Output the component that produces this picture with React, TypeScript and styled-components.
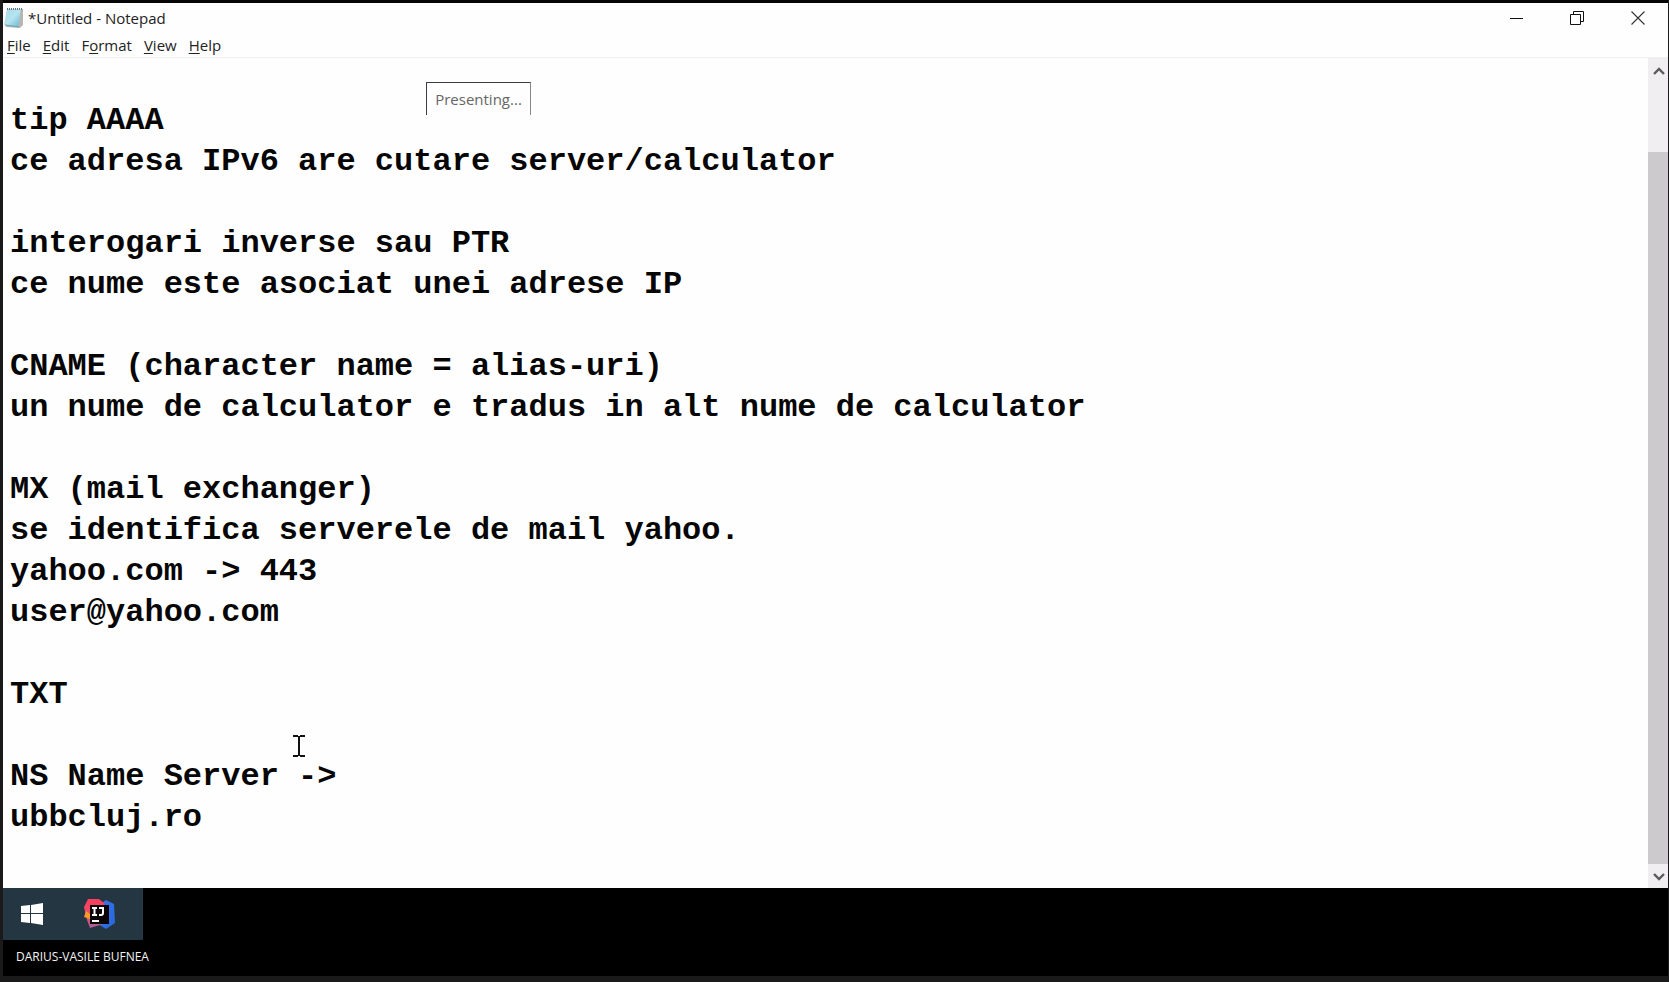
import React from "react";
import styled, { createGlobalStyle } from "styled-components";

const GlobalStyle = createGlobalStyle`
  * { box-sizing: border-box; }
  body {
    margin: 0;
    background: #1a1a1a;
    font-family: "Open Sans", "Noto Sans", sans-serif;
  }
  button { border: 0; padding: 0; background: none; font: inherit; color: inherit; }
`;

const Screen = styled.div`
  display: flex;
  flex-direction: column;
  min-height: 100vh;
  padding: 0 1px 6px 3px;
`;

const NotepadWindow = styled.main`
  position: relative;
  flex: 1;
  display: flex;
  flex-direction: column;
  background: #fefefe;
  border-top: 3px solid #050505;
`;

const TitleBar = styled.header`
  display: flex;
  align-items: center;
  height: 30px;
  padding-left: 1px;
`;

const Title = styled.h1`
  flex: 1;
  margin: 0 0 0 4px;
  font-size: 15px;
  line-height: 20px;
  font-weight: 400;
  color: #222;
`;

const CaptionButton = styled.button`
  display: flex;
  align-items: center;
  justify-content: center;
  width: 61px;
  height: 30px;
`;

const MenuBar = styled.nav`
  display: flex;
  gap: 12px;
  height: 25px;
  padding-left: 4px;
  border-bottom: 1px solid #efefef;
`;

const MenuButton = styled.button`
  font-size: 15px;
  line-height: 24px;
  color: #222;
  u { text-underline-offset: 2px; }
`;

const Editor = styled.div`
  flex: 1;
  display: flex;
`;

const Document = styled.textarea`
  flex: 1;
  min-width: 0;
  border: 0;
  outline: 0;
  resize: none;
  overflow: hidden;
  padding: 1px 7px 0;
  background: transparent;
  color: #060606;
  font: 700 32px/41px "Liberation Mono", monospace;
`;

const ScrollBar = styled.div`
  display: flex;
  flex-direction: column;
  width: 20px;
  background: #f1eef1;
`;

const ScrollButton = styled.button`
  display: flex;
  align-items: center;
  justify-content: center;
  height: 24px;
  padding: 2px 0 0 2px;
`;

const Track = styled.div`
  flex: 1;
  display: flex;
  flex-direction: column;
  justify-content: flex-end;
`;

const Thumb = styled.div`
  height: 91%;
  background: #cdcacd;
`;

const PresentingBadge = styled.div`
  position: absolute;
  left: 423px;
  top: 79px;
  width: 105px;
  height: 33px;
  border: 1px solid #3c3c42;
  border-right-color: #88858b;
  border-bottom: 0;
  background: #fefefe;
  color: #666;
  font-size: 15px;
  line-height: 32px;
  text-align: center;
`;

const TextPointer = styled.svg`
  position: absolute;
  left: 290px;
  top: 732px;
`;

const Footer = styled.footer`
  display: flex;
  flex-direction: column;
  align-items: flex-start;
  height: 88px;
  background: #000;
`;

const Taskbar = styled.div`
  display: flex;
  height: 52px;
  width: 140px;
  background: #233642;
`;

const TaskButton = styled.button<{ $width: number }>`
  display: flex;
  align-items: center;
  justify-content: center;
  width: ${(p) => p.$width}px;
`;

const Presenter = styled.span`
  padding: 6px 0 0 13px;
  font-size: 12px;
  line-height: 22px;
  color: #f4f4f4;
`;

const NotepadIcon = () => (
  <svg width="20" height="22" viewBox="0 0 20 22" aria-hidden="true">
    <defs>
      <linearGradient id="pad" x1="0" y1="0" x2="1" y2="1">
        <stop offset="0" stopColor="#a5dbe9" />
        <stop offset=".5" stopColor="#b7e4ef" />
        <stop offset="1" stopColor="#62b5d0" />
      </linearGradient>
    </defs>
    <path d="M3 2 19 2 19 18 16 21 2 20Z" fill="#b1b9bd" />
    <path d="M3 2 17 2 14 20 0 18Z" fill="url(#pad)" />
    <path d="M17 3 19 3 19 18 15 20Z" fill="#b9b6b2" />
    <path d="M3 2H18" stroke="#5f7780" strokeWidth="2" strokeDasharray="1 1" />
    <path d="M1 18 15 20" stroke="#6e9dac" />
  </svg>
);

const WindowsLogo = () => (
  <svg width="22" height="22" viewBox="0 0 22 22" aria-hidden="true" fill="#fff">
    <path d="M0 3 9 2V10H0ZM10 2 22 0V10H10ZM0 11H9V20L0 19ZM10 11H22V22L10 20Z" />
  </svg>
);

const IntelliJLogo = () => (
  <svg width="32" height="32" viewBox="0 0 32 32" aria-hidden="true">
    <defs>
      <linearGradient id="ij-red" x1="0" y1="0" x2="0" y2="1">
        <stop offset="0" stopColor="#fb3d5d" />
        <stop offset=".6" stopColor="#e5506c" />
        <stop offset="1" stopColor="#a5619b" />
      </linearGradient>
      <linearGradient id="ij-blue" x1="0" y1="0" x2="1" y2="1">
        <stop offset="0" stopColor="#7760b8" />
        <stop offset=".4" stopColor="#2f70e8" />
        <stop offset="1" stopColor="#2867d7" />
      </linearGradient>
    </defs>
    <path d="M16 6 22 2 30 6 31 25 22 31 14 26Z" fill="url(#ij-blue)" />
    <path d="M4 1 15 1 20 5 19 26 6 30 3 22 0 9Z" fill="url(#ij-red)" />
    <path d="M2 13 6 16V21L0 19Z" fill="#f59b2c" />
    <rect x="6" y="7" width="19" height="19" fill="#0b0508" />
    <path d="M8 10H13M10.500 10V17M8 17H13M15 10H19V15Q19 17 17 17H15" fill="none" stroke="#fff" strokeWidth="2" />
    <path d="M8 23H15" stroke="#fff" strokeWidth="2" />
  </svg>
);

const Chevron = ({ down = false }: { down?: boolean }) => (
  <svg width="12" height="8" viewBox="0 0 12 8" aria-hidden="true">
    <path d={down ? "M1 1 6 6 11 1" : "M1 7 6 2 11 7"} fill="none" stroke="#5c5a5c" strokeWidth="2.4" />
  </svg>
);

const menus = [
  ["", "F", "ile"],
  ["", "E", "dit"],
  ["F", "o", "rmat"],
  ["", "V", "iew"],
  ["", "H", "elp"],
];

const notes = `
tip AAAA
ce adresa IPv6 are cutare server/calculator

interogari inverse sau PTR
ce nume este asociat unei adrese IP

CNAME (character name = alias-uri)
un nume de calculator e tradus in alt nume de calculator

MX (mail exchanger)
se identifica serverele de mail yahoo.
yahoo.com -> 443
user@yahoo.com

TXT

NS Name Server ->
ubbcluj.ro`;

export default function App() {
  return (
    <>
      <GlobalStyle />
      <Screen>
        <NotepadWindow>
          <TitleBar>
            <NotepadIcon />
            <Title>*Untitled - Notepad</Title>
            <CaptionButton aria-label="Minimize">
              <svg width="14" height="14"><path d="M1 7.500H14" stroke="#111" /></svg>
            </CaptionButton>
            <CaptionButton aria-label="Restore">
              <svg width="14" height="14" fill="none" stroke="#111">
                <path d="M.5 3.500H10.500V13.500H.5ZM3.500 3V.5H13.500V10.500H11" />
              </svg>
            </CaptionButton>
            <CaptionButton aria-label="Close">
              <svg width="14" height="14"><path d="M.5.5 13.500 13.500M13.500.5.5 13.500" stroke="#333" strokeWidth="1.100" /></svg>
            </CaptionButton>
          </TitleBar>
          <MenuBar aria-label="Menu">
            {menus.map(([before, key, after]) => (
              <MenuButton key={before + key + after}>
                {before}<u>{key}</u>{after}
              </MenuButton>
            ))}
          </MenuBar>
          <Editor>
            <Document aria-label="Document text" spellCheck={false} defaultValue={notes} />
            <ScrollBar>
              <ScrollButton aria-label="Scroll up"><Chevron /></ScrollButton>
              <Track><Thumb /></Track>
              <ScrollButton aria-label="Scroll down"><Chevron down /></ScrollButton>
            </ScrollBar>
          </Editor>
          <PresentingBadge>Presenting...</PresentingBadge>
          <TextPointer width="13" height="23" viewBox="0 0 13 23" aria-hidden="true">
            <path d="M0 1H5M7 1H12M0 21H5M7 21H12M6 1V21" stroke="#111" strokeWidth="2" />
          </TextPointer>
        </NotepadWindow>
        <Footer>
          <Taskbar>
            <TaskButton $width={58} aria-label="Start"><WindowsLogo /></TaskButton>
            <TaskButton $width={78} aria-label="IntelliJ IDEA"><IntelliJLogo /></TaskButton>
          </Taskbar>
          <Presenter>DARIUS-VASILE BUFNEA</Presenter>
        </Footer>
      </Screen>
    </>
  );
}
